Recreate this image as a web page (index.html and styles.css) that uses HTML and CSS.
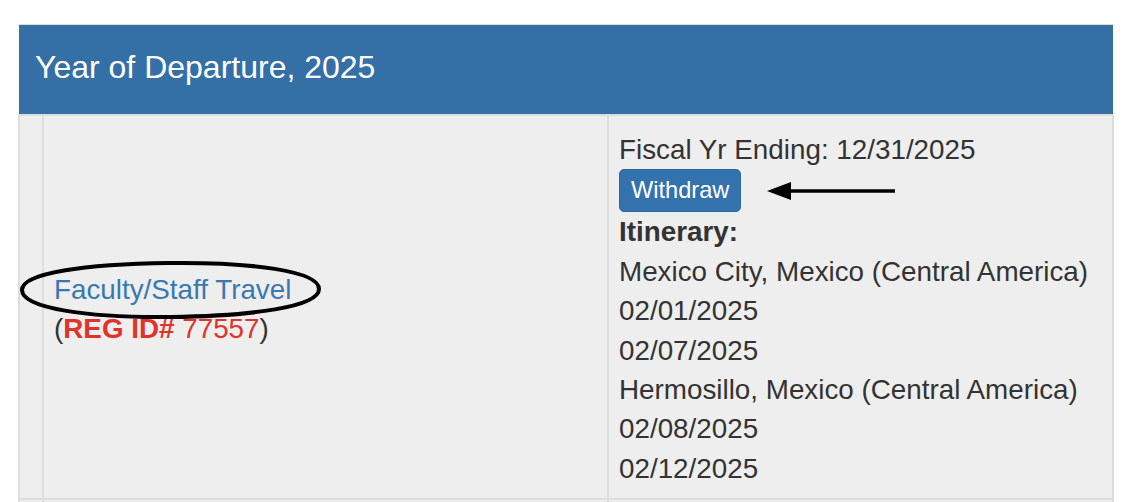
FILE: index.html
```html
<!DOCTYPE html>
<html lang="en">
<head>
  <meta charset="UTF-8">
  <title>Trips</title>
  <link rel="stylesheet" href="styles.css">
</head>
<body>
  <table class="trips">
    <thead>
      <tr>
        <th colspan="3">Year of Departure, 2025</th>
      </tr>
    </thead>
    <tbody>
      <tr>
        <td class="pad"></td>
        <td class="program">
          <div class="circled">
            <a href="#">Faculty/Staff Travel</a>
            <svg class="ring" width="304" height="62" viewBox="0 0 304 62">
              <path d="M150 4 C232 3 300 12 300 30 C300 48 232 57 152 58 C68 59 3 49 3 31 C3 14 66 5 150 4 Z" fill="none" stroke="#000" stroke-width="4"/>
            </svg>
          </div>
          <div>(<span class="reg"><b>REG ID#</b> 77557</span>)</div>
        </td>
        <td class="details">
          <div>Fiscal Yr Ending: 12/31/2025</div>
          <div class="action">
            <button type="button">Withdraw</button>
            <svg class="arrow" width="128" height="24" viewBox="0 0 128 24">
              <line x1="20" y1="12" x2="128" y2="12" stroke="#000" stroke-width="3.4"/>
              <polygon points="0,12 24,3 24,21" fill="#000"/>
            </svg>
          </div>
          <div><b>Itinerary:</b></div>
          <div>Mexico City, Mexico (Central America)</div>
          <div>02/01/2025</div>
          <div>02/07/2025</div>
          <div>Hermosillo, Mexico (Central America)</div>
          <div>02/08/2025</div>
          <div>02/12/2025</div>
        </td>
      </tr>
      <tr class="next">
        <td></td>
        <td></td>
        <td></td>
      </tr>
    </tbody>
  </table>
</body>
</html>
```

FILE: styles.css
```css
body {
  margin: 0;
  padding: 24px 0 0 18px;
  font-family: "Liberation Sans", Arial, sans-serif;
  color: #333;
  background: #fff;
}

.trips {
  width: 1096px;
  border-collapse: collapse;
  font-size: 27.8px;
  line-height: 39.4px;
}

.trips th {
  height: 85px;
  padding: 0 16px 4px 16px;
  background-color: #3470a6;
  color: #fff;
  font-size: 32px;
  font-weight: normal;
  text-align: left;
  border-top: 1px solid #ddd;
}

.trips td {
  background-color: #eee;
  border: 2px solid #ddd;
}

.pad {
  width: 20px;
}

.program {
  width: 543px;
  padding: 4px 10px 0 10px;
  vertical-align: middle;
}

.program a {
  color: #3a78b0;
  text-decoration: none;
}

.circled {
  position: relative;
}

.ring {
  position: absolute;
  left: -35px;
  top: -11px;
}

.reg {
  color: #e2332a;
}

.details {
  padding: 14px 10px 10px 10px;
  vertical-align: top;
}

.action {
  display: flex;
  align-items: center;
  height: 43px;
}

button {
  height: 43px;
  padding: 0 11px;
  font-family: "Liberation Sans", Arial, sans-serif;
  font-size: 23.6px;
  color: #fff;
  background-color: #3372ad;
  border: 1px solid #2e6a9f;
  border-radius: 5px;
}

.arrow {
  margin-left: 26px;
}

.next td {
  height: 20px;
}
```
